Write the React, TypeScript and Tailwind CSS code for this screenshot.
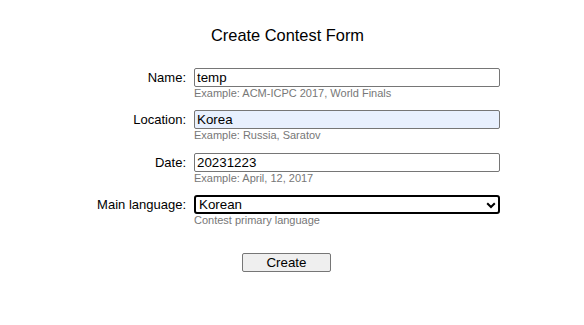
import React from "react";

const font = { fontFamily: '"Liberation Sans", Arial, sans-serif' };

function Row({
  label,
  hint,
  children,
}: {
  label: string;
  hint: string;
  children: React.ReactNode;
}) {
  return (
    <div className="flex flex-col">
      <div className="flex items-center">
        <div className="w-[186px] text-right text-[13px] leading-[19px] text-black">{label}</div>
        <div className="ml-[8px] w-[306px]">{children}</div>
      </div>
      <div className="ml-[194px] text-[11px] leading-[13px] text-[#777777]">{hint}</div>
    </div>
  );
}

export default function App() {
  return (
    <div className="w-[584px] h-[325px] bg-white" style={font}>
      <div className="w-[575px] pt-[26px]">
        <div className="text-center text-[16.4px] leading-[19px] text-black">Create Contest Form</div>
        <div className="mt-[23px] flex flex-col gap-[10.4px]">
          <Row label="Name:" hint="Example: ACM-ICPC 2017, World Finals">
            <input
              readOnly
              defaultValue="temp"
              className="block w-[306px] h-[19px] border border-[#767676] rounded-[2px] px-[2px] py-0 text-[13.33px] leading-[17px] text-black bg-white outline-none"
            />
          </Row>
          <Row label="Location:" hint="Example: Russia, Saratov">
            <input
              readOnly
              defaultValue="Korea"
              className="block w-[306px] h-[19px] border border-[#767676] rounded-[2px] px-[2px] py-0 text-[13.33px] leading-[17px] text-black bg-[#e8f0fe] outline-none"
            />
          </Row>
          <Row label="Date:" hint="Example: April, 12, 2017">
            <input
              readOnly
              defaultValue="20231223"
              className="block w-[306px] h-[19px] border border-[#767676] rounded-[2px] px-[2px] py-0 text-[13.33px] leading-[17px] text-black bg-white outline-none"
            />
          </Row>
          <Row label="Main language:" hint="Contest primary language">
            <div className="relative w-[306px] h-[19px] border-2 border-black rounded-[3px] bg-white flex items-center">
              <span className="pl-[3px] text-[13.33px] leading-[15px] text-black">Korean</span>
              <svg
                className="absolute right-[2px] top-[5px]"
                width="10"
                height="7"
                viewBox="0 0 10 7"
              >
                <path d="M1.2 1.2 L5 5 L8.8 1.2" fill="none" stroke="#000" strokeWidth="2" />
              </svg>
            </div>
          </Row>
        </div>
        <div className="mt-[26px] flex justify-center">
          <div className="ml-[-2px] w-[89px] h-[19px] border border-[#767676] rounded-[2px] bg-[#efefef] flex items-center justify-center text-[13.33px] leading-[17px] text-black">
            Create
          </div>
        </div>
      </div>
    </div>
  );
}
